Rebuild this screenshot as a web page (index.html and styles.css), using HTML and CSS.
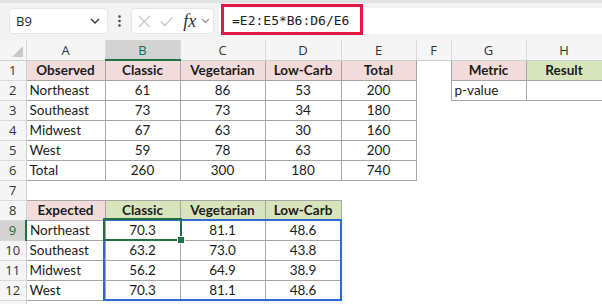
FILE: index.html
```html
<!DOCTYPE html>
<html lang="en">
<head>
    <meta charset="UTF-8">
    <title>Chi-square expected counts</title>
    <link rel="stylesheet" href="styles.css">
</head>
<body>
    <div class="fbar">
        <div class="namebox">
            <span>B9</span>
            <svg width="10" height="6" viewBox="0 0 10 6"><path d="M1 1l4 4 4-4" stroke="#333" stroke-width="1.3" fill="none"/></svg>
        </div>
        <div class="dots">
            <svg width="3" height="12" viewBox="0 0 3 12"><circle cx="1.5" cy="1.5" r="1.3" fill="#444"/><circle cx="1.5" cy="6" r="1.3" fill="#444"/><circle cx="1.5" cy="10.5" r="1.3" fill="#444"/></svg>
        </div>
        <div class="fxgroup">
            <svg class="ico" width="13" height="13" viewBox="0 0 13 13"><path d="M1 1l11 11M12 1L1 12" stroke="#c4c4c4" stroke-width="1.3"/></svg>
            <svg class="ico" width="14" height="11" viewBox="0 0 14 11"><path d="M1 5.5l4 4.2L13 1" stroke="#c4c4c4" stroke-width="1.3" fill="none"/></svg>
            <span class="fx">fx</span>
            <svg width="9" height="6" viewBox="0 0 9 6"><path d="M1 1l3.5 3.5L8 1" stroke="#8a8a8a" stroke-width="1.2" fill="none"/></svg>
        </div>
        <div class="finput">=E2:E5*B6:D6/E6</div>
        <div class="callout"></div>
    </div>

    <div class="sheet">
        <table class="grid">
            <colgroup>
                <col style="width:26px"><col style="width:79px"><col style="width:75px"><col style="width:85px">
                <col style="width:76px"><col style="width:75px"><col style="width:35px"><col style="width:75px"><col style="width:76px">
            </colgroup>
            <tr class="colhead">
                <th class="corner"><svg width="11" height="11" viewBox="0 0 11 11"><path d="M11 0V11H0z" fill="#c9c9c9"/></svg></th>
                <th>A</th><th class="sel">B</th><th>C</th><th>D</th><th>E</th><th>F</th><th>G</th><th>H</th>
            </tr>
            <tr>
                <th class="rh">1</th>
                <td class="b pink hd">Observed</td><td class="b pink hd">Classic</td><td class="b pink hd">Vegetarian</td>
                <td class="b pink hd">Low-Carb</td><td class="b pink hd">Total</td><td></td>
                <td class="b pink hd">Metric</td><td class="b green hd">Result</td>
            </tr>
            <tr>
                <th class="rh">2</th>
                <td class="b">Northeast</td><td class="b n">61</td><td class="b n">86</td><td class="b n">53</td><td class="b n">200</td><td></td>
                <td class="b">p-value</td><td class="b"></td>
            </tr>
            <tr>
                <th class="rh">3</th>
                <td class="b">Southeast</td><td class="b n">73</td><td class="b n">73</td><td class="b n">34</td><td class="b n">180</td><td></td><td></td><td></td>
            </tr>
            <tr>
                <th class="rh">4</th>
                <td class="b">Midwest</td><td class="b n">67</td><td class="b n">63</td><td class="b n">30</td><td class="b n">160</td><td></td><td></td><td></td>
            </tr>
            <tr>
                <th class="rh">5</th>
                <td class="b">West</td><td class="b n">59</td><td class="b n">78</td><td class="b n">63</td><td class="b n">200</td><td></td><td></td><td></td>
            </tr>
            <tr>
                <th class="rh">6</th>
                <td class="b">Total</td><td class="b n">260</td><td class="b n">300</td><td class="b n">180</td><td class="b n">740</td><td></td><td></td><td></td>
            </tr>
            <tr>
                <th class="rh">7</th>
                <td></td><td></td><td></td><td></td><td></td><td></td><td></td><td></td>
            </tr>
            <tr>
                <th class="rh">8</th>
                <td class="b pink hd">Expected</td><td class="b green hd">Classic</td><td class="b green hd">Vegetarian</td>
                <td class="b green hd">Low-Carb</td><td></td><td></td><td></td><td></td>
            </tr>
            <tr>
                <th class="rh selrow">9</th>
                <td class="b">Northeast</td><td class="b n">70.3</td><td class="b n">81.1</td><td class="b n">48.6</td><td></td><td></td><td></td><td></td>
            </tr>
            <tr>
                <th class="rh">10</th>
                <td class="b">Southeast</td><td class="b n">63.2</td><td class="b n">73.0</td><td class="b n">43.8</td><td></td><td></td><td></td><td></td>
            </tr>
            <tr>
                <th class="rh">11</th>
                <td class="b">Midwest</td><td class="b n">56.2</td><td class="b n">64.9</td><td class="b n">38.9</td><td></td><td></td><td></td><td></td>
            </tr>
            <tr>
                <th class="rh">12</th>
                <td class="b">West</td><td class="b n">70.3</td><td class="b n">81.1</td><td class="b n">48.6</td><td></td><td></td><td></td><td></td>
            </tr>
            <tr>
                <th class="rh"></th>
                <td></td><td></td><td></td><td></td><td></td><td></td><td></td><td></td>
            </tr>
        </table>
        <div class="range"></div>
        <div class="active"><span class="handle"></span></div>
    </div>
</body>
</html>
```

FILE: styles.css
```css
body {
    margin: 0;
    width: 602px;
    height: 304px;
    overflow: hidden;
    background: #fff;
    font-family: Lato, "Open Sans", sans-serif;
    color: #1b1b1b;
}

/* formula bar */
.fbar {
    position: relative;
    display: flex;
    align-items: flex-start;
    box-sizing: border-box;
    height: 40px;
    padding: 5px 0 0 9px;
    background: #f3f3f3;
    border-top: 3px solid #e2e2e2;
}
.namebox {
    display: flex;
    align-items: center;
    justify-content: space-between;
    box-sizing: border-box;
    width: 99px;
    height: 26px;
    padding: 0 7px 0 6px;
    background: #fff;
    border: 1px solid #e6e6e6;
    border-radius: 4px;
    font-family: "Open Sans", sans-serif;
    font-size: 13px;
    color: #222;
}
.dots {
    display: flex;
    align-items: center;
    justify-content: center;
    width: 23px;
    height: 26px;
}
.fxgroup {
    display: flex;
    align-items: center;
    box-sizing: border-box;
    width: 83px;
    height: 26px;
    padding: 0 3px 0 6px;
    background: #fff;
    border: 1px solid #e6e6e6;
    border-radius: 4px;
    gap: 9px;
}
.fxgroup .fx {
    font-family: "Liberation Serif", serif;
    font-style: italic;
    font-size: 18px;
    color: #333;
    margin-left: 1px;
    margin-right: -4px;
}
.finput {
    flex: 1;
    box-sizing: border-box;
    height: 26px;
    margin-left: 5px;
    padding-left: 13px;
    background: #fff;
    font-family: "DejaVu Sans Mono", monospace;
    font-size: 13px;
    line-height: 26px;
    color: #222;
}
.callout {
    position: absolute;
    left: 221px;
    top: 1px;
    width: 142px;
    height: 31px;
    box-sizing: border-box;
    border: 3px solid #e2184b;
}

/* sheet */
.sheet {
    position: relative;
}
.grid {
    border-collapse: collapse;
    table-layout: fixed;
    width: 602px;
    font-size: 13.5px;
}
.grid tr {
    height: 20px;
}
.grid td,
.grid th {
    box-sizing: border-box;
    height: 20px;
    line-height: 16px;
    white-space: nowrap;
    overflow: hidden;
}
.grid td {
    padding: 0 3px;
    border: none;
}
.grid th {
    padding: 0;
    background: #f5f5f5;
    font-family: "Open Sans", sans-serif;
    font-weight: normal;
    font-size: 13px;
    color: #333;
}
.colhead th {
    border-right: 1px solid #dadada;
    border-bottom: 1px solid #cfcfcf;
}
.colhead th.sel {
    background: #d3d3d3;
    color: #1e6b3a;
    border-bottom: 2px solid #217346;
}
.corner {
    text-align: right;
    vertical-align: bottom;
}
.corner svg {
    display: block;
    margin: 0 3px 3px auto;
}
.rh {
    border-right: 1px solid #cfcfcf;
    border-bottom: 1px solid #dadada;
}
.rh.selrow {
    background: #d3d3d3;
    color: #1e6b3a;
    border-right: 2px solid #217346;
}
.grid td.b {
    border: 1px solid #a6a6a6;
}
.pink {
    background: #f2dcdb;
}
.green {
    background: #d8e4bc;
}
.hd {
    font-weight: bold;
    text-align: center;
}
.n {
    text-align: center;
}

/* selection overlays */
.range {
    position: absolute;
    left: 103px;
    top: 179px;
    width: 239px;
    height: 82px;
    box-sizing: border-box;
    border: 2px solid #2e6bd0;
    box-shadow: 2px 2px 3px rgba(0,0,0,0.06);
}
.active {
    position: absolute;
    left: 103px;
    top: 178px;
    width: 79px;
    height: 23px;
    box-sizing: border-box;
    border: 2px solid #217346;
}
.handle {
    position: absolute;
    right: -5px;
    bottom: -5px;
    width: 6px;
    height: 6px;
    background: #217346;
    border: 1px solid #fff;
}
```
